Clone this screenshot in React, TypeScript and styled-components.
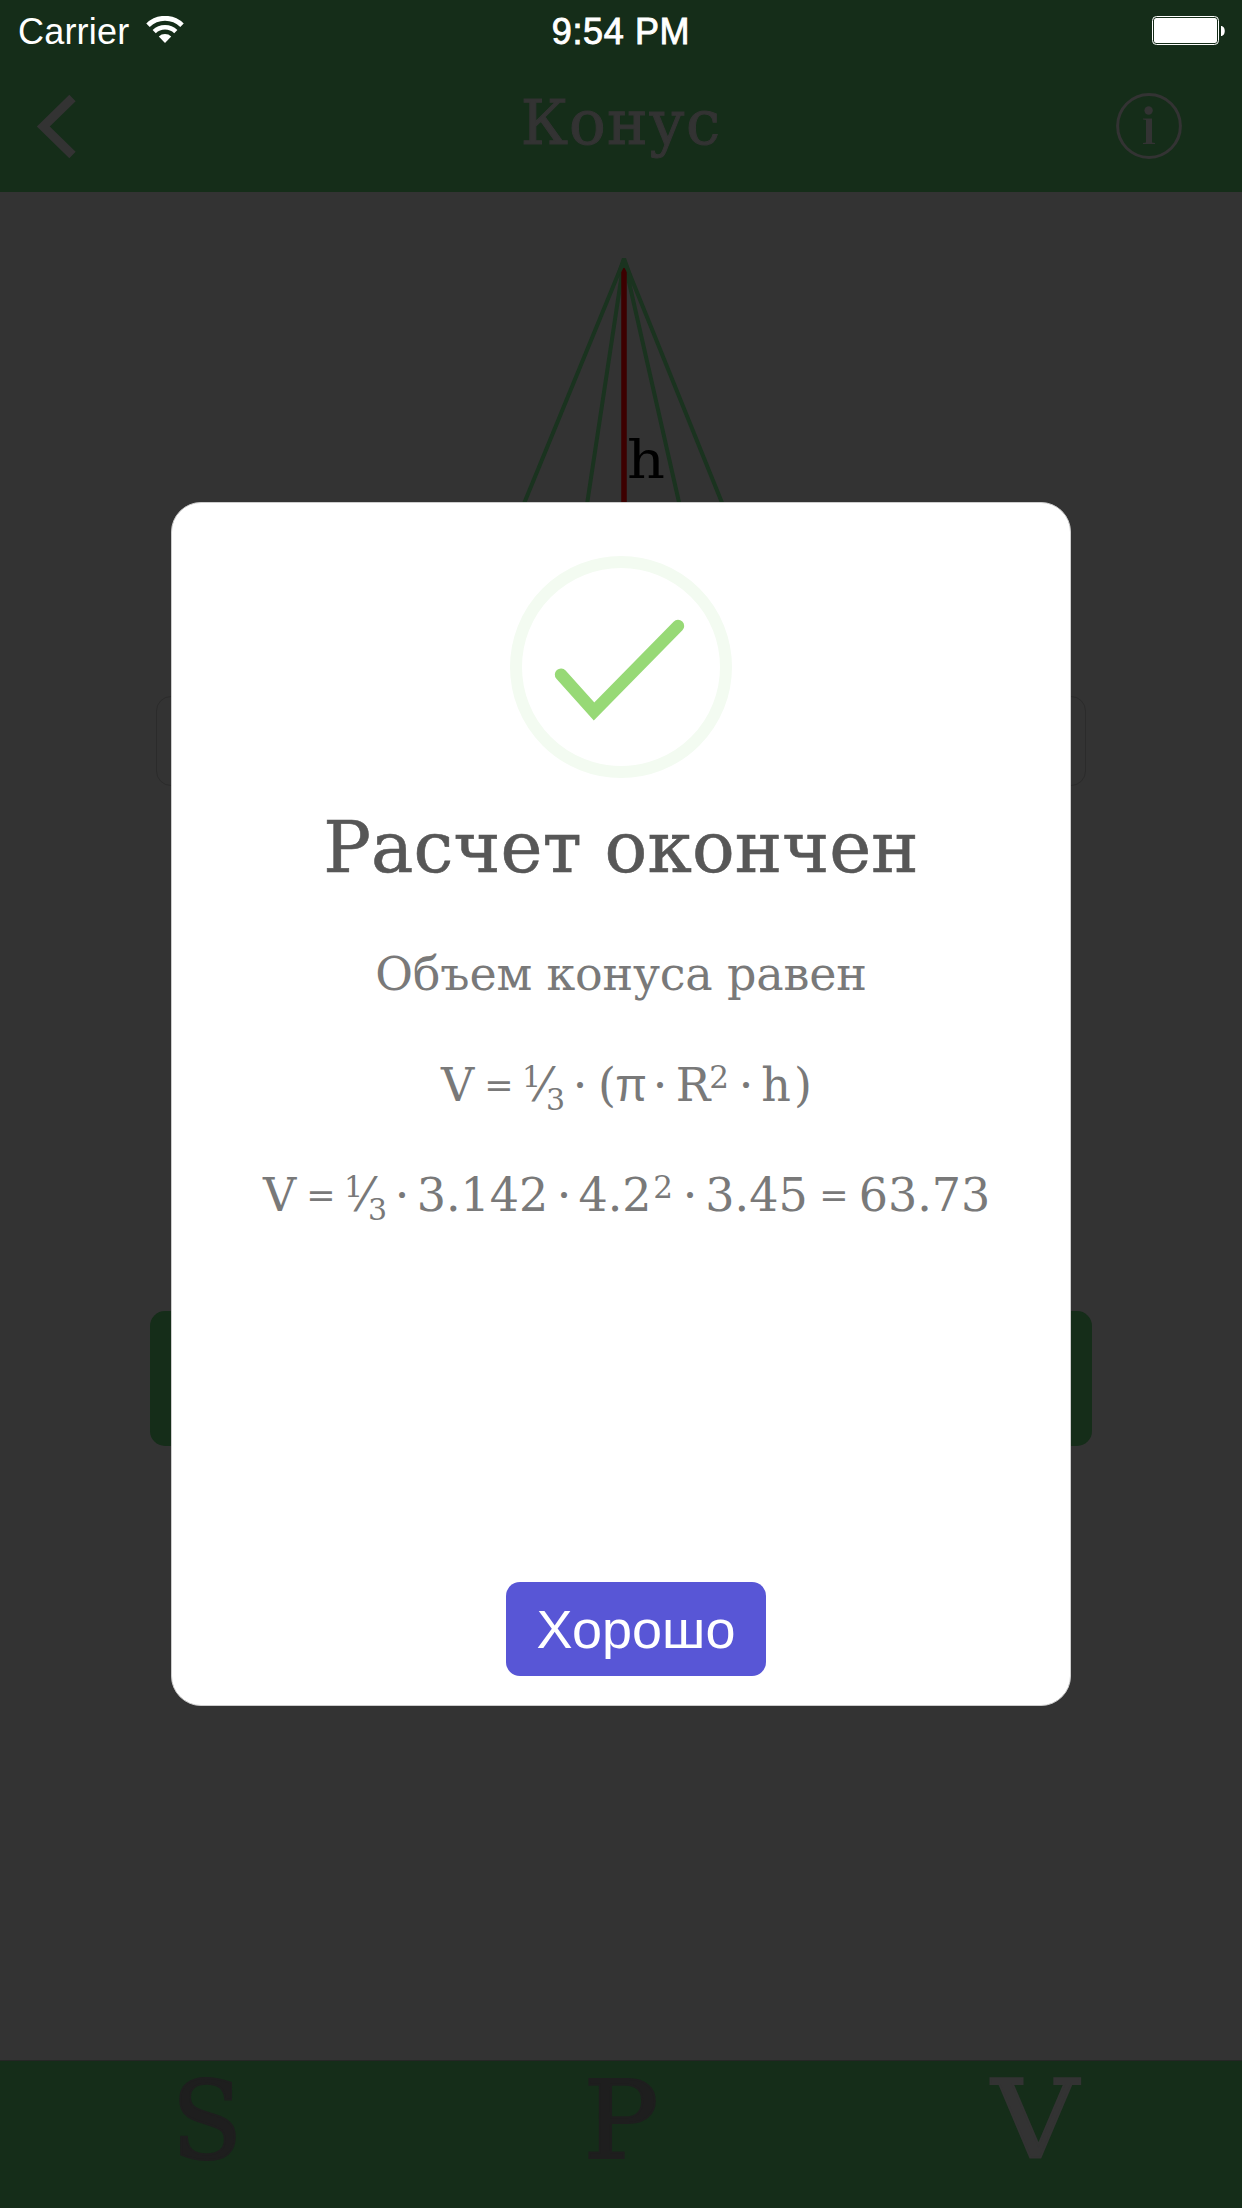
import React from "react";
import styled, { createGlobalStyle } from "styled-components";

const green = "#152d19";
const shade = "#333333";
const slab = `"DejaVu Serif", "Liberation Serif", serif`;
const sans = `"Liberation Sans", Arial, sans-serif`;

const GlobalStyle = createGlobalStyle`
  * { box-sizing: border-box; }
  body { margin: 0; background: ${shade}; }
`;

const Screen = styled.div`
  position: relative;
  width: 1242px;
  height: 2208px;
  display: flex;
  flex-direction: column;
  background: ${shade};
  font-family: ${slab};
  overflow: hidden;
`;

const Header = styled.header`
  height: 192px;
  display: flex;
  flex-direction: column;
  background: ${green};
`;

const StatusBar = styled.div`
  height: 60px;
  display: grid;
  grid-template-columns: 1fr auto 1fr;
  color: #fff;
  font: 36px/63px ${sans};
`;

const Carrier = styled.div`
  display: flex;
  align-items: flex-start;
  gap: 17px;
  padding-left: 18px;
  letter-spacing: 0.2px;
  svg { margin-top: 16px; }
`;

const Clock = styled.div`
  -webkit-text-stroke: 0.9px #fff;
  letter-spacing: 0.6px;
`;

const BatterySlot = styled.div`
  display: flex;
  justify-content: flex-end;
  padding: 16px 17px 0 0;
`;

const NavBar = styled.div`
  flex: 1;
  display: grid;
  grid-template-columns: 1fr auto 1fr;
  color: ${shade};
`;

const NavSide = styled.button<{ $end?: boolean }>`
  display: flex;
  justify-content: ${(p) => (p.$end ? "flex-end" : "flex-start")};
  padding: ${(p) => (p.$end ? "33px 60px 0 0" : "34px 0 0 36px")};
  border: 0;
  background: none;
  color: inherit;
`;

const NavTitle = styled.h1`
  margin: 0;
  padding-top: 22px;
  font-size: 61px;
  font-weight: 400;
  line-height: 82px;
  letter-spacing: 1.2px;
  -webkit-text-stroke: 1px ${shade};
`;

const Main = styled.main`
  flex: 1;
  display: flex;
  flex-direction: column;
  align-items: center;
`;

const Figure = styled.svg`
  margin-top: 60px;
  height: 444px;
  width: 400px;
  display: block;
`;

const Field = styled.div`
  width: 930px;
  height: 90px;
  border: 1px solid #2b2b2b;
  border-radius: 15px;
`;

const Calculate = styled.div`
  margin-top: 525px;
  width: 942px;
  height: 135px;
  border-radius: 15px;
  background: ${green};
`;

const TabBar = styled.nav`
  height: 148px;
  display: grid;
  grid-template-columns: repeat(3, 1fr);
  border-top: 1px solid #262626;
  background: ${green};
`;

const Tab = styled.div<{ $active?: boolean; $stretch: number }>`
  color: ${(p) => (p.$active ? shade : "#1e1e1e")};
  -webkit-text-stroke: 2px currentColor;
  font-size: 109px;
  line-height: 120px;
  text-align: center;
  transform: scaleX(${(p) => p.$stretch});
`;

const Modal = styled.section`
  position: absolute;
  left: 171px;
  top: 502px;
  width: 900px;
  height: 1204px;
  display: flex;
  flex-direction: column;
  align-items: center;
  padding: 53px 0 29px;
  border: 1px solid #cdcdcd;
  border-radius: 30px;
  background: #fff;
`;

const ModalTitle = styled.h2`
  margin: 25px 0 0;
  color: #575757;
  font-size: 71px;
  font-weight: 400;
  line-height: 90px;
  letter-spacing: 0.1px;
  white-space: nowrap;
  -webkit-text-stroke: 0.6px currentColor;
`;

const Message = styled.p`
  margin: 51px 0 0;
  color: #797979;
  font-size: 46px;
  line-height: 61px;
  letter-spacing: -0.2px;
  white-space: nowrap;
`;

const Formula = styled.div<{ $gap: number; $indent: number }>`
  align-self: stretch;
  display: flex;
  height: 60px;
  margin-top: ${(p) => p.$gap}px;
  padding-left: ${(p) => p.$indent}px;
  color: #797979;
  font-size: 46px;
  line-height: 61px;
  white-space: nowrap;
`;

const Term = styled.span<{ $w: number; $gap?: number; $size?: number; $rise?: number; $sans?: boolean }>`
  display: flex;
  justify-content: center;
  width: ${(p) => p.$w}px;
  margin-left: ${(p) => p.$gap ?? 0}px;
  font-size: ${(p) => p.$size ?? 46}px;
  margin-top: ${(p) => -(p.$rise ?? 0)}px;
  font-family: ${(p) => (p.$sans ? sans : slab)};
`;

const Confirm = styled.button`
  margin: auto 0 0 30px;
  width: 260px;
  height: 94px;
  padding: 0;
  border: 0;
  border-radius: 14px;
  background: #5856d6;
  color: #fff;
  font: 54px/92px ${sans};
`;

function Third() {
  return (
    <>
      <Term $w={15} $gap={14} $size={30} $rise={9}>1</Term>
      <Term $w={13} $gap={-2}>⁄</Term>
      <Term $w={17} $gap={-3} $size={30} $rise={-14}>3</Term>
    </>
  );
}

function Dot({ gap }: { gap: number }) {
  return <Term $w={8} $gap={gap}>·</Term>;
}

export default function App() {
  return (
    <Screen>
      <GlobalStyle />
      <Header>
        <StatusBar>
          <Carrier>
            Carrier
            <svg width="38" height="28" viewBox="0 0 38 28" fill="none" stroke="#fff">
              <path d="M2 9.2a24.5 24.5 0 0 1 34 0" strokeWidth="5" />
              <path d="M8.2 15.6a15.6 15.6 0 0 1 21.6 0" strokeWidth="4.6" />
              <path d="M19 27l-6.2-6.4a9 9 0 0 1 12.4 0z" fill="#fff" stroke="none" />
            </svg>
          </Carrier>
          <Clock>9:54 PM</Clock>
          <BatterySlot>
            <svg width="73" height="29" viewBox="0 0 73 29">
              <rect x="0.5" y="0.5" width="66" height="28" rx="4" fill="none" stroke="#fff" />
              <rect x="2" y="2" width="63" height="25" rx="2.5" fill="#fff" />
              <path d="M69 10c5 0 5 10 0 10z" fill="#fff" />
            </svg>
          </BatterySlot>
        </StatusBar>
        <NavBar>
          <NavSide aria-label="Назад">
            <svg width="42" height="66" viewBox="0 0 42 66" fill="none" stroke={shade} strokeWidth="9">
              <path d="M36.5 4L7.3 32.5L36.5 61" />
            </svg>
          </NavSide>
          <NavTitle>Конус</NavTitle>
          <NavSide $end aria-label="Информация">
            <svg width="66" height="66" viewBox="0 0 66 66" fill={shade}>
              <circle cx="33" cy="33" r="31.4" fill="none" stroke={shade} strokeWidth="3" />
              <circle cx="32.6" cy="17.5" r="4.2" />
              <path d="M27 25.5h9v24l3 .5v1H27v-1l3-.5V27l-3-.5z" />
            </svg>
          </NavSide>
        </NavBar>
      </Header>

      <Main>
        <Figure viewBox="421 252 400 444">
          <g fill="none" stroke="#1a331f" strokeWidth="4">
            <path d="M624 260L445 696M624 260L558 696M624 260L723 696M624 260L800 696" />
          </g>
          <path d="M624 268V696" stroke="#3d0000" strokeWidth="5.5" />
          <path d="M622 258h4l6 18h-3l-5-9-5 9h-3z" fill="#1a331f" />
          <text x="627" y="478" fontSize="53" fontFamily="DejaVu Serif, serif" textLength="38" lengthAdjust="spacingAndGlyphs">h</text>
        </Figure>
        <Field />
        <Calculate />
      </Main>

      <TabBar>
        <Tab $stretch={0.95}>S</Tab>
        <Tab $stretch={1.03}>P</Tab>
        <Tab $active $stretch={1.1}>V</Tab>
      </TabBar>

      <Modal>
        <svg width="222" height="222" viewBox="0 0 222 222" fill="none">
          <circle cx="111" cy="111" r="105" stroke="#f3fbf1" strokeWidth="12" />
          <path d="M51 118.7L84 155.5L168 70" stroke="#97d976" strokeWidth="12.4" strokeLinecap="round" />
        </svg>
        <ModalTitle>Расчет окончен</ModalTitle>
        <Message>Объем конуса равен</Message>
        <Formula $gap={50} $indent={268}>
          <Term $w={35}>V</Term>
          <Term $w={22} $gap={13} $size={35}>=</Term>
          <Third />
          <Dot gap={12} />
          <Term $w={18} $gap={14}>(</Term>
          <Term $w={26} $gap={2} $sans>π</Term>
          <Dot gap={12} />
          <Term $w={34} $gap={12}>R</Term>
          <Term $w={18} $gap={0} $size={31} $rise={8}>2</Term>
          <Dot gap={14} />
          <Term $w={30} $gap={11}>h</Term>
          <Term $w={18} $gap={3}>)</Term>
        </Formula>
        <Formula $gap={50} $indent={90}>
          <Term $w={35}>V</Term>
          <Term $w={22} $gap={13} $size={35}>=</Term>
          <Third />
          <Dot gap={12} />
          <Term $w={127} $gap={13}>3.142</Term>
          <Dot gap={14} />
          <Term $w={72} $gap={11}>4.2</Term>
          <Term $w={18} $gap={3} $size={31} $rise={8}>2</Term>
          <Dot gap={14} />
          <Term $w={101} $gap={12}>3.45</Term>
          <Term $w={22} $gap={16} $size={35}>=</Term>
          <Term $w={133} $gap={13}>63.73</Term>
        </Formula>
        <Confirm>Хорошо</Confirm>
      </Modal>
    </Screen>
  );
}
